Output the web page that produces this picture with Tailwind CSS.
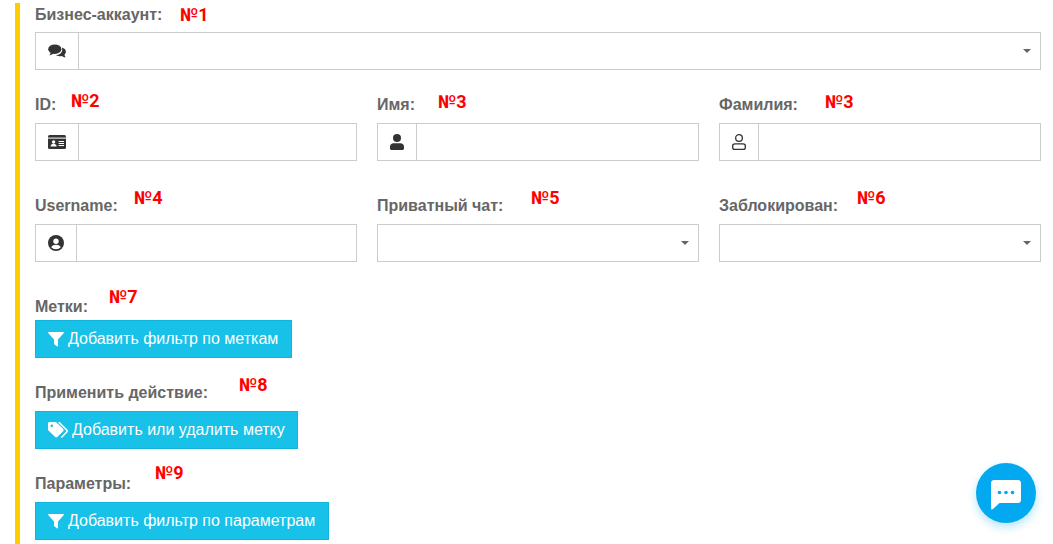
<!DOCTYPE html>
<html lang="ru">
<head>
    <meta charset="UTF-8">
    <title>Фильтры</title>
    <script src="https://cdn.jsdelivr.net/npm/@tailwindcss/browser@4"></script>
</head>
<body class="bg-white h-[544px] overflow-hidden relative font-['Liberation_Sans',Arial,sans-serif]">

    <div class="ml-[15px] mt-[3px] w-[1026px] h-[541px] border-l-[5px] border-[#ffcc00] pl-[15px]">

        <!-- business account -->
        <div class="h-[29px] pt-[3px] text-[16px] leading-[18px] font-bold text-[#666]">Бизнес-аккаунт:</div>
        <div class="flex h-[38px] border border-[#ccc]">
            <div class="w-[43px] border-r border-[#ccc] flex items-center justify-center shrink-0">
                <svg class="w-[18px] h-[15px]" viewBox="0 0 18 15" fill="#333"><ellipse cx="6.8" cy="5.2" rx="6.6" ry="4.8"/><path d="M1.5 11.6 3 8l3 1.6z"/><path d="M13.9 3.6c2.4.6 4 2.2 4 4.2 0 1.2-.6 2.2-1.5 3l1.2 2.6c-1.4 0-3-.6-3.6-1.4-.6.2-1.4.3-2.1.3-1.6 0-3-.5-4-1.2 4 0 7.4-2.6 6-7.5z"/></svg>
            </div>
            <div class="flex-1 flex items-center justify-end pr-[9px]">
                <div class="w-0 h-0 border-x-[4px] border-x-transparent border-t-[4px] border-t-[#666]"></div>
            </div>
        </div>

        <!-- id, first name, last name -->
        <div class="grid grid-cols-3 gap-x-[20px] mt-[22px]">
            <div>
                <div class="h-[31px] pt-[4px] text-[16px] leading-[18px] font-bold text-[#666]">ID:</div>
                <div class="flex h-[38px] border border-[#ccc]">
                    <div class="w-[43px] border-r border-[#ccc] flex items-center justify-center shrink-0">
                        <svg class="w-[18px] h-[14px]" viewBox="0 0 18 14"><rect width="18" height="14" rx="1.5" fill="#333"/><rect y="2.6" width="18" height="1" fill="#fff"/><circle cx="5.6" cy="7" r="1.7" fill="#fff"/><path d="M2.6 11.6c0-2 1.2-2.8 3-2.8s3 .8 3 2.8z" fill="#fff"/><path d="M10.6 6h5.4v1h-5.4zM10.6 8h5.4v1h-5.4zM10.6 10h5.4v1h-5.4z" fill="#fff"/></svg>
                    </div>
                    <div class="flex-1"></div>
                </div>
            </div>
            <div>
                <div class="h-[31px] pt-[4px] text-[16px] leading-[18px] font-bold text-[#666]">Имя:</div>
                <div class="flex h-[38px] border border-[#ccc]">
                    <div class="w-[39px] border-r border-[#ccc] flex items-center justify-center shrink-0">
                        <svg class="w-[14px] h-[16px]" viewBox="0 0 14 16" fill="#333"><circle cx="7" cy="4" r="4"/><path d="M3.5 9.2h7c2 0 3.5 1.5 3.5 3.5v1.8c0 .8-.7 1.5-1.5 1.5h-11C.7 16 0 15.300 0 14.500v-1.800c0-2 1.500-3.500 3.500-3.500z"/></svg>
                    </div>
                    <div class="flex-1"></div>
                </div>
            </div>
            <div>
                <div class="h-[31px] pt-[4px] text-[16px] leading-[18px] font-bold text-[#666]">Фамилия:</div>
                <div class="flex h-[38px] border border-[#ccc]">
                    <div class="w-[39px] border-r border-[#ccc] flex items-center justify-center shrink-0">
                        <svg class="w-[14px] h-[16px]" viewBox="0 0 14 16" fill="none" stroke="#333" stroke-width="1.300"><circle cx="7" cy="4" r="3.350"/><rect x=".65" y="9.850" width="12.700" height="5.500" rx="2.200"/></svg>
                    </div>
                    <div class="flex-1"></div>
                </div>
            </div>
        </div>

        <!-- username, private chat, blocked -->
        <div class="grid grid-cols-3 gap-x-[20px] mt-[32px]">
            <div>
                <div class="h-[31px] pt-[4px] text-[16px] leading-[18px] font-bold text-[#666]">Username:</div>
                <div class="flex h-[38px] border border-[#ccc]">
                    <div class="w-[41px] border-r border-[#ccc] flex items-center justify-center shrink-0">
                        <svg class="w-[16px] h-[16px]" viewBox="0 0 16 16"><circle cx="8" cy="8" r="8" fill="#333"/><circle cx="8" cy="6.200" r="2.700" fill="#fff"/><path d="M3.200 12.300c.8-1.700 2.600-2.500 4.800-2.500s4 .8 4.800 2.500c-1.200 1.200-2.900 2-4.800 2s-3.600-.8-4.800-2z" fill="#fff"/></svg>
                    </div>
                    <div class="flex-1"></div>
                </div>
            </div>
            <div>
                <div class="h-[31px] pt-[4px] text-[16px] leading-[18px] font-bold text-[#666]">Приватный чат:</div>
                <div class="flex h-[38px] border border-[#ccc] items-center justify-end pr-[9px]">
                    <div class="w-0 h-0 border-x-[4px] border-x-transparent border-t-[4px] border-t-[#666]"></div>
                </div>
            </div>
            <div>
                <div class="h-[31px] pt-[4px] text-[16px] leading-[18px] font-bold text-[#666]">Заблокирован:</div>
                <div class="flex h-[38px] border border-[#ccc] items-center justify-end pr-[9px]">
                    <div class="w-0 h-0 border-x-[4px] border-x-transparent border-t-[4px] border-t-[#666]"></div>
                </div>
            </div>
        </div>

        <!-- tags -->
        <div class="mt-[33px] h-[25px] pt-[3px] text-[16px] leading-[18px] font-bold text-[#666]">Метки:</div>
        <button class="flex items-center h-[38px] w-[257px] pl-[12px] bg-[#17c1e8] border border-[#0fb5dc] text-white text-[16px]">
            <svg class="w-[16px] h-[16px] mr-[4px]" viewBox="0 0 16 16" fill="#fff"><path d="M.6 1h14.800c.5 0 .8.600.4 1L10 8.400V15c0 .4-.5.600-.8.400L6.300 13.300a.6.6 0 0 1-.3-.5V8.400L.2 2C-.2 1.600.100 1 .6 1z"/></svg>
            Добавить фильтр по меткам
        </button>

        <!-- actions -->
        <div class="mt-[26px] h-[27px] text-[16px] leading-[18px] font-bold text-[#666]">Применить действие:</div>
        <button class="flex items-center h-[38px] w-[263px] pl-[12px] bg-[#17c1e8] border border-[#0fb5dc] text-white text-[16px]">
            <svg class="w-[20px] h-[16px] mr-[4px]" viewBox="0 0 20 16" fill="#fff"><path d="M0 1.500C0 .7.700 0 1.500 0h5.900c.4 0 .8.200 1.100.4l6.700 6.700c.6.600.6 1.600 0 2.100l-5.900 5.900c-.6.600-1.500.600-2.100 0L.4 8.500C.2 8.200 0 7.800 0 7.400zM3.800 5a1.300 1.300 0 1 0 0-2.600 1.300 1.300 0 0 0 0 2.600z" fill-rule="evenodd"/><path d="M10 0h1.300c.4 0 .8.200 1 .4l7 7c.9.900.9 2.300 0 3.200l-5.100 5.100c-.3.300-.8.300-1.100 0-.3-.3-.3-.7 0-1l5-5.100c.3-.3.300-.8 0-1.100L11 1.400C10.800 1 10.400.5 10 0z"/></svg>
            Добавить или удалить метку
        </button>

        <!-- params -->
        <div class="mt-[26px] h-[27px] text-[16px] leading-[18px] font-bold text-[#666]">Параметры:</div>
        <button class="flex items-center h-[38px] w-[294px] pl-[12px] bg-[#17c1e8] border border-[#0fb5dc] text-white text-[16px]">
            <svg class="w-[16px] h-[16px] mr-[4px]" viewBox="0 0 16 16" fill="#fff"><path d="M.6 1h14.800c.5 0 .8.600.4 1L10 8.400V15c0 .4-.5.600-.8.400L6.300 13.300a.6.6 0 0 1-.3-.5V8.400L.2 2C-.2 1.600.100 1 .6 1z"/></svg>
            Добавить фильтр по параметрам
        </button>
    </div>

    <!-- red notes drawn over the form -->
    <span class="absolute left-[180px] top-[4px] text-[18px] leading-[22px] font-bold text-[#ff0000] font-['Roboto',sans-serif]">№1</span>
    <span class="absolute left-[71px] top-[90px] text-[18px] leading-[22px] font-bold text-[#ff0000] font-['Roboto',sans-serif]">№2</span>
    <span class="absolute left-[438px] top-[91px] text-[18px] leading-[22px] font-bold text-[#ff0000] font-['Roboto',sans-serif]">№3</span>
    <span class="absolute left-[825px] top-[91px] text-[18px] leading-[22px] font-bold text-[#ff0000] font-['Roboto',sans-serif]">№3</span>
    <span class="absolute left-[134px] top-[187px] text-[18px] leading-[22px] font-bold text-[#ff0000] font-['Roboto',sans-serif]">№4</span>
    <span class="absolute left-[531px] top-[187px] text-[18px] leading-[22px] font-bold text-[#ff0000] font-['Roboto',sans-serif]">№5</span>
    <span class="absolute left-[857px] top-[187px] text-[18px] leading-[22px] font-bold text-[#ff0000] font-['Roboto',sans-serif]">№6</span>
    <span class="absolute left-[109px] top-[286px] text-[18px] leading-[22px] font-bold text-[#ff0000] font-['Roboto',sans-serif]">№7</span>
    <span class="absolute left-[239px] top-[374px] text-[18px] leading-[22px] font-bold text-[#ff0000] font-['Roboto',sans-serif]">№8</span>
    <span class="absolute left-[155px] top-[462px] text-[18px] leading-[22px] font-bold text-[#ff0000] font-['Roboto',sans-serif]">№9</span>

    <!-- chat button -->
    <div class="absolute left-[976px] top-[463px] w-[60px] h-[60px] rounded-full bg-[#03a9f0] shadow-[0_4px_10px_rgba(3,169,240,0.3)] flex items-center justify-center">
        <svg class="w-[30px] h-[30px] mt-[3px]" viewBox="0 0 30 30"><path d="M3 0h24c1.700 0 3 1.300 3 3v17c0 1.700-1.300 3-3 3H8.500l-6.500 6C1 29.800 0 29.400 0 28.500V3C0 1.300 1.300 0 3 0z" fill="#fff"/><circle cx="8.500" cy="12.500" r="1.800" fill="#03a9f0"/><circle cx="15" cy="12.500" r="1.800" fill="#03a9f0"/><circle cx="21.500" cy="12.500" r="1.800" fill="#03a9f0"/></svg>
    </div>
</body>
</html>
